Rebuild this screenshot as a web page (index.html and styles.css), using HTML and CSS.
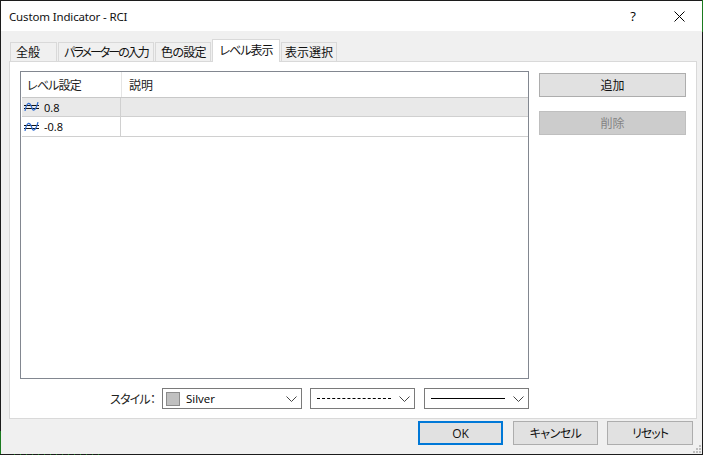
FILE: index.html
```html
<!DOCTYPE html>
<html lang="ja">
<head>
<meta charset="utf-8">
<title>Custom Indicator - RCI</title>
<link rel="stylesheet" href="styles.css">
</head>
<body>
<div class="window">
  <header class="titlebar">
    <span class="title">Custom Indicator - RCI</span>
    <span class="help">?</span>
    <svg class="close" width="11" height="11" viewBox="0 0 11 11"><path d="M0.500 0.500L10.500 10.500M10.500 0.500L0.500 10.500" stroke="#000" stroke-width="1" fill="none"/></svg>
  </header>
  <main class="body">
    <nav class="tabs">
      <span class="tab tab-1">全般</span>
      <span class="tab tab-2">パラメーターの入力</span>
      <span class="tab tab-3">色の設定</span>
      <span class="tab tab-active">レベル表示</span>
      <span class="tab tab-5">表示選択</span>
    </nav>
    <section class="panel">
      <div class="upper">
        <div class="grid">
          <div class="row head">
            <div class="c1">レベル設定</div>
            <div class="c2">説明</div>
          </div>
          <div class="row item selected">
            <div class="c1">
              <svg class="lv" width="16" height="10" viewBox="0 0 16 10"><path d="M1 3.500H16M1 6.500H16" stroke="#111" fill="none"/><path d="M2 9C3 3 5 0 7 2S9 9 11 8S14 4 15 0" stroke="#2f6bd0" stroke-width="1.200" fill="none"/></svg>
              <span>0.8</span>
            </div>
            <div class="c2"></div>
          </div>
          <div class="row item">
            <div class="c1">
              <svg class="lv" width="16" height="10" viewBox="0 0 16 10"><path d="M1 3.500H16M1 6.500H16" stroke="#111" fill="none"/><path d="M2 9C3 3 5 0 7 2S9 9 11 8S14 4 15 0" stroke="#2f6bd0" stroke-width="1.200" fill="none"/></svg>
              <span>-0.8</span>
            </div>
            <div class="c2"></div>
          </div>
        </div>
        <div class="side">
          <button class="btn side-btn">追加</button>
          <button class="btn side-btn disabled">削除</button>
        </div>
      </div>
      <div class="style-row">
        <label class="style-label">スタイル：</label>
        <div class="select sel-color">
          <span class="swatch"></span><span class="sel-text">Silver</span>
          <svg class="chev" width="11" height="6" viewBox="0 0 11 6"><path d="M0.500 0.500L5.500 5.500L10.500 0.500" stroke="#444" fill="none"/></svg>
        </div>
        <div class="select sel-line">
          <span class="dash"></span>
          <svg class="chev" width="11" height="6" viewBox="0 0 11 6"><path d="M0.500 0.500L5.500 5.500L10.500 0.500" stroke="#444" fill="none"/></svg>
        </div>
        <div class="select sel-line">
          <span class="solid"></span>
          <svg class="chev" width="11" height="6" viewBox="0 0 11 6"><path d="M0.500 0.500L5.500 5.500L10.500 0.500" stroke="#444" fill="none"/></svg>
        </div>
      </div>
    </section>
    <footer class="footer">
      <button class="btn foot-btn default">OK</button>
      <button class="btn foot-btn foot-cancel">キャンセル</button>
      <button class="btn foot-btn foot-last">リセット</button>
    </footer>
    <svg class="grip" width="10" height="10" viewBox="0 0 10 10"><path d="M7 1h2v2h-2zM4 4h2v2h-2zM7 4h2v2h-2zM1 7h2v2h-2zM4 7h2v2h-2zM7 7h2v2h-2z" fill="#bdbdbd"/></svg>
  </main>
  <span class="edge edge-left"></span>
  <span class="edge edge-right"></span>
  <span class="edge edge-ticks"></span>
</div>
</body>
</html>
```
FILE: styles.css
```css
* { box-sizing: border-box; }
html, body { margin: 0; padding: 0; }
body {
  width: 703px;
  height: 455px;
  overflow: hidden;
  font-family: "Noto Sans CJK JP", "Noto Sans", sans-serif;
  font-size: 12px;
  font-feature-settings: "palt";
  color: #000;
  background: #111;
}
.window {
  position: relative;
  width: 703px;
  height: 455px;
  border: 1px solid #1c1c1c;
  display: flex;
  flex-direction: column;
  background: #f0f0f0;
}
.edge { position: absolute; }
.edge-left { left: -1px; top: 430px; width: 1px; height: 23px; background: #1b7a1f; }
.edge-right { right: -1px; top: -1px; width: 1px; height: 32px; background: #1b7a1f; }
.edge-ticks {
  left: 13px;
  bottom: -1px;
  width: 88px;
  height: 1px;
  background: repeating-linear-gradient(90deg, #1b7a1f 0 1px, transparent 1px 6px);
}
.titlebar {
  height: 30px;
  flex: none;
  background: #fff;
  display: flex;
  align-items: center;
  padding-left: 8px;
}
.title {
  font-family: "Noto Sans", sans-serif;
  font-size: 11.500px;
  letter-spacing: -0.150px;
  color: #111;
  flex: 1;
}
.help {
  font-family: "Open Sans", sans-serif;
  font-size: 13px;
  width: 14px;
  margin-right: 34px;
  text-align: center;
}
.close { margin-right: 17px; }
.body {
  flex: 1;
  position: relative;
  padding: 8px 5px 0 8px;
  display: flex;
  flex-direction: column;
}
.tabs {
  height: 22px;
  flex: none;
  display: flex;
  align-items: flex-end;
  padding-left: 1px;
  gap: 1px;
  position: relative;
  z-index: 1;
}
.tab {
  height: 19px;
  background: #f0f0f0;
  border: 1px solid #d9d9d9;
  border-bottom: 0;
  display: flex;
  align-items: center;
  justify-content: center;
  padding-bottom: 2px;
  white-space: nowrap;
  font-size: 12px;
  color: #111;
}
.tab-1 { width: 47px; padding-right: 11px; }
.tab-2 { width: 96px; letter-spacing: -2px; }
.tab-3 { width: 56px; letter-spacing: -0.700px; padding-left: 1px; }
.tab-active {
  width: 68px;
  height: 23px;
  background: #fff;
  margin-bottom: -1px;
  padding-bottom: 4px;
  letter-spacing: -1px;
}
.tab-5 { width: 56px; }
.panel {
  width: 688px;
  height: 358px;
  flex: none;
  background: #fff;
  border: 1px solid #d9d9d9;
  padding: 9px 10px 0;
  display: flex;
  flex-direction: column;
}
.upper {
  display: flex;
  height: 308px;
  flex: none;
}
.grid {
  width: 509px;
  height: 308px;
  border: 1px solid #828790;
  background: #fff;
  padding-left: 1px;
  flex: none;
}
.row { display: flex; }
.head { height: 26px; border-bottom: 1px solid #c8c8c8; }
.head .c1 { width: 100px; padding-left: 5px; border-right: 1px solid #e5e5e5; line-height: 25px; letter-spacing: -0.800px; color: #222; }
.head .c2 { padding-left: 7px; line-height: 25px; color: #222; }
.item { height: 19px; border-bottom: 1px solid #d0d0d0; }
.item + .item { height: 20px; }
.item .c1 {
  width: 99px;
  border-right: 1px solid #d0d0d0;
  display: flex;
  align-items: center;
  padding-left: 1px;
  gap: 5px;
  font-family: "Open Sans", sans-serif;
  font-size: 11px;
}
.item .c2 { flex: 1; }
.selected { background: #e9e9e9; }
.side {
  margin-left: 10px;
  padding-top: 2px;
  display: flex;
  flex-direction: column;
  gap: 14px;
}
.btn {
  font-family: "Noto Sans CJK JP", sans-serif;
  font-feature-settings: "palt";
  font-size: 12px;
  background: #e1e1e1;
  border: 1px solid #adadad;
  color: #111;
  padding: 0 0 2px;
  height: 24px;
}
.side-btn { width: 147px; }
.disabled { background: #cccccc; border-color: #bfbfbf; color: #838383; }
.style-row {
  display: flex;
  align-items: center;
  height: 21px;
  margin-top: 9px;
}
.style-label { margin-left: 90px; width: 52px; color: #222; white-space: nowrap; letter-spacing: -0.800px; }
.select {
  height: 21px;
  background: #fff;
  border: 1px solid #7a7a7a;
  display: flex;
  align-items: center;
  position: relative;
}
.sel-color { width: 140px; margin-right: 8px; padding-left: 3px; }
.sel-line { width: 105px; margin-right: 9px; padding-left: 6px; }
.sel-line:last-child { margin-right: 0; }
.swatch { width: 14px; height: 14px; background: #c0c0c0; border: 1px solid #8c8c8c; margin-right: 6px; }
.sel-text { font-family: "Open Sans", sans-serif; font-size: 11.500px; }
.dash { width: 74px; border-top: 1px dashed #000; }
.solid { width: 74px; border-top: 1px solid #000; }
.chev { position: absolute; right: 4px; top: 7px; }
.footer {
  display: flex;
  justify-content: flex-end;
  gap: 10px;
  margin-top: 2px;
  padding-right: 4px;
}
.foot-btn { width: 85px; height: 24px; }
.foot-cancel { letter-spacing: -0.500px; }
.foot-last { width: 86px; margin-left: -1px; letter-spacing: -1px; }
.default { border: 2px solid #0078d7; font-family: "Open Sans", sans-serif; padding-bottom: 0; }
.grip { position: absolute; right: 0; bottom: 0; }
```
